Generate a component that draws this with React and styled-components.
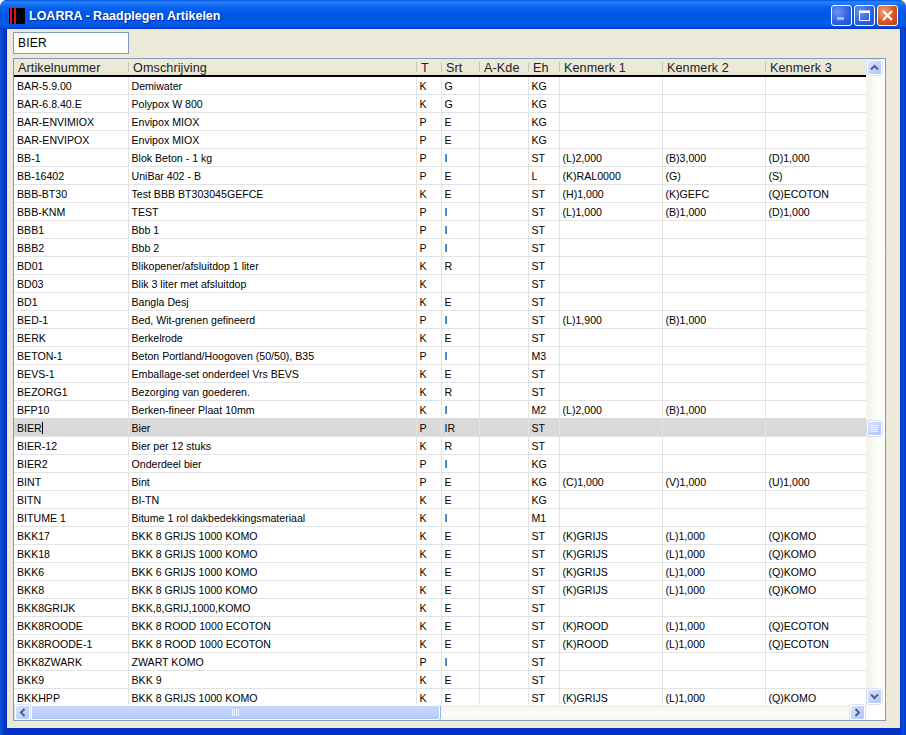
import React from 'react';
import styled, { createGlobalStyle } from 'styled-components';

const Global = createGlobalStyle`
  html, body { margin: 0; padding: 0; background: #fff; }
  #root { width: 906px; height: 735px; overflow: hidden; }
`;

const COLS = [115, 288, 25, 38, 49, 31, 103, 103, 101];
const GRID = COLS.map((c) => `${c}px`).join(' ');

const Win = styled.div`
  position: relative;
  width: 906px;
  height: 735px;
  box-sizing: border-box;
  border-radius: 7px 7px 0 0;
  background: linear-gradient(90deg, #0a58dc 0, #0331c4 5px, #0331c4 calc(100% - 6px), #0a4fdc calc(100% - 3px), #0335c8 100%);
  overflow: hidden;
`;
const TitleBar = styled.div`
  height: 29px;
  display: flex;
  align-items: center;
  padding: 2px 8px 0 9px;
  box-sizing: border-box;
  background: linear-gradient(180deg, #0050e0 0, #2a86f8 2px, #1c7ef8 3px, #0a62ee 7px, #0055e2 16px, #005ef0 23px, #0050da 27px, #0331c4 29px);
`;
const Logo = styled.svg`
  width: 16px;
  height: 16px;
  margin-right: 4px;
  flex: none;
`;
const TitleText = styled.div`
  flex: 1;
  font: bold 12.5px "Liberation Sans", Arial, sans-serif;
  letter-spacing: 0;
  color: #fff;
  text-shadow: 1px 1px 1px #0a2a9a;
`;
const WinBtn = styled.div`
  width: 21px;
  height: 21px;
  box-sizing: border-box;
  margin-left: 2px;
  border: 1px solid #fff;
  border-radius: 3px;
  display: flex;
  align-items: center;
  justify-content: center;
  background: ${(p) => (p.$close
    ? 'radial-gradient(circle at 30% 30%, #f0a080, #d8501f 60%, #c03a10)'
    : 'radial-gradient(circle at 30% 30%, #6a94f0, #2d5fe0 60%, #2452d4)')};
`;
const Body = styled.div`
  position: absolute;
  left: 7px;
  right: 6px;
  top: 29px;
  bottom: 7px;
  background: #ece9d8;
`;
const Search = styled.div`
  position: absolute;
  left: 6px;
  top: 3px;
  width: 116px;
  height: 22px;
  box-sizing: border-box;
  border: 1px solid #7f9db9;
  background: #fff;
  padding-left: 4px;
  font: 12px/21px "Liberation Sans", Arial, sans-serif;
  letter-spacing: 0.2px;
  color: #000;
`;
const Table = styled.div`
  position: absolute;
  left: 6px;
  top: 29px;
  width: 873px;
  height: 663px;
  box-sizing: border-box;
  border: 1px solid #7f9db9;
  background: #fff;
  overflow: hidden;
`;
const Head = styled.div`
  display: grid;
  grid-template-columns: ${GRID};
  height: 18px;
  box-sizing: border-box;
  width: 852px;
  background: linear-gradient(180deg, #ece9d8 0, #ece9d8 13px, #e2dfcc 16px, #d8d4bf 16px);
  border-bottom: 2px solid #000;
`;
const HeadCell = styled.div`
  font: 12.6px/18px "Liberation Sans", Arial, sans-serif;
  letter-spacing: 0.1px;
  color: #222;
  padding-left: 4px;
  white-space: nowrap;
  overflow: hidden;
  position: relative;
  &::after {
    content: '';
    position: absolute;
    right: 0;
    top: 3px;
    width: 1px;
    height: 10px;
    background: #c9c5b0;
  }
`;
const RowEl = styled.div`
  display: grid;
  grid-template-columns: ${GRID};
  height: 18px;
  box-sizing: border-box;
  width: 852px;
  border-bottom: 1px solid #e3e3e3;
  background: ${(p) => (p.$sel ? '#d9d9d9' : '#fff')};
  box-shadow: ${(p) => (p.$sel ? '0 -1px 0 #d9d9d9' : 'none')};
`;
const Cell = styled.div`
  font: 10.6px/19px "Liberation Sans", Arial, sans-serif;
  color: #000;
  padding-left: ${(p) => (p.$first ? 3 : 2.5)}px;
  box-sizing: border-box;
  border-right: 1px solid #e3e3e3;
  white-space: nowrap;
  overflow: hidden;
`;
const Caret = styled.span`
  display: inline-block;
  width: 1px;
  height: 12px;
  background: #000;
  vertical-align: -2px;
`;
const VTrack = styled.div`
  position: absolute;
  left: 852px;
  top: 0;
  width: 19px;
  height: 646px;
  background: linear-gradient(90deg, #f2f1ea, #fdfdfb 60%, #fff);
`;
const HTrack = styled.div`
  position: absolute;
  left: 0;
  top: 646px;
  width: 852px;
  height: 15px;
  background: linear-gradient(180deg, #f1f0e8, #fdfdfb 60%, #f6f5ee);
`;
const Corner = styled.div`
  position: absolute;
  left: 852px;
  top: 646px;
  width: 19px;
  height: 15px;
  background: #fff;
`;
const SbBtn = styled.div`
  position: absolute;
  left: ${(p) => p.$x}px;
  top: ${(p) => p.$y}px;
  width: ${(p) => p.$w || 15}px;
  height: ${(p) => p.$h || 15}px;
  box-sizing: border-box;
  border: 1px solid #fff;
  border-radius: 2px;
  background: linear-gradient(135deg, #d9e4fd, #c0d2fa 60%, #aec4f5);
  display: flex;
  align-items: center;
  justify-content: center;
  box-shadow: 0 0 0 0.5px #b8c8ea;
`;
const HThumb = styled.div`
  position: absolute;
  left: 17px;
  top: 0;
  width: 409px;
  height: 15px;
  box-sizing: border-box;
  border: 1px solid #fff;
  border-radius: 2px;
  background: linear-gradient(180deg, #c7d7fb, #bdd0fa 70%, #aec4f5);
  box-shadow: 1px 0 0 #9db5e6;
  display: flex;
  align-items: center;
  justify-content: center;
`;

const Chev = ({ d }) => (
  <svg width="9" height="7" viewBox="0 0 9 7">
    <path d={d} fill="none" stroke="#4d6185" strokeWidth="2" />
  </svg>
);
const ChevH = ({ d }) => (
  <svg width="7" height="9" viewBox="0 0 7 9">
    <path d={d} fill="none" stroke="#4d6185" strokeWidth="2" />
  </svg>
);

const raw = `BAR-5.9.00|Demiwater|K|G|KG|||
BAR-6.8.40.E|Polypox W 800|K|G|KG|||
BAR-ENVIMIOX|Envipox MIOX|P|E|KG|||
BAR-ENVIPOX|Envipox MIOX|P|E|KG|||
BB-1|Blok Beton - 1 kg|P|I|ST|(L)2,000|(B)3,000|(D)1,000
BB-16402|UniBar 402 - B|P|E|L|(K)RAL0000|(G)|(S)
BBB-BT30|Test BBB BT303045GEFCE|K|E|ST|(H)1,000|(K)GEFC|(Q)ECOTON
BBB-KNM|TEST|P|I|ST|(L)1,000|(B)1,000|(D)1,000
BBB1|Bbb 1|P|I|ST|||
BBB2|Bbb 2|P|I|ST|||
BD01|Blikopener/afsluitdop 1 liter|K|R|ST|||
BD03|Blik 3 liter met afsluitdop|K||ST|||
BD1|Bangla Desj|K|E|ST|||
BED-1|Bed, Wit-grenen gefineerd|P|I|ST|(L)1,900|(B)1,000|
BERK|Berkelrode|K|E|ST|||
BETON-1|Beton Portland/Hoogoven (50/50), B35|P|I|M3|||
BEVS-1|Emballage-set onderdeel Vrs BEVS|K|E|ST|||
BEZORG1|Bezorging van goederen.|K|R|ST|||
BFP10|Berken-fineer Plaat 10mm|K|I|M2|(L)2,000|(B)1,000|
BIER|Bier|P|IR|ST|||
BIER-12|Bier per 12 stuks|K|R|ST|||
BIER2|Onderdeel bier|P|I|KG|||
BINT|Bint|P|E|KG|(C)1,000|(V)1,000|(U)1,000
BITN|BI-TN|K|E|KG|||
BITUME 1|Bitume 1 rol dakbedekkingsmateriaal|K|I|M1|||
BKK17|BKK 8 GRIJS 1000 KOMO|K|E|ST|(K)GRIJS|(L)1,000|(Q)KOMO
BKK18|BKK 8 GRIJS 1000 KOMO|K|E|ST|(K)GRIJS|(L)1,000|(Q)KOMO
BKK6|BKK 6 GRIJS 1000 KOMO|K|E|ST|(K)GRIJS|(L)1,000|(Q)KOMO
BKK8|BKK 8 GRIJS 1000 KOMO|K|E|ST|(K)GRIJS|(L)1,000|(Q)KOMO
BKK8GRIJK|BKK,8,GRIJ,1000,KOMO|K|E|ST|||
BKK8ROODE|BKK 8 ROOD 1000 ECOTON|K|E|ST|(K)ROOD|(L)1,000|(Q)ECOTON
BKK8ROODE-1|BKK 8 ROOD 1000 ECOTON|K|E|ST|(K)ROOD|(L)1,000|(Q)ECOTON
BKK8ZWARK|ZWART KOMO|P|I|ST|||
BKK9|BKK 9|K|E|ST|||
BKKHPP|BKK 8 GRIJS 1000 KOMO|K|E|ST|(K)GRIJS|(L)1,000|(Q)KOMO`;

const rows = raw.split('\n').map((l) => {
  const [a, b, t, s, e, k1, k2, k3] = l.split('|');
  return { a, b, t, s, e, k1, k2, k3 };
});

const heads = ['Artikelnummer', 'Omschrijving', 'T', 'Srt', 'A-Kde', 'Eh', 'Kenmerk 1', 'Kenmerk 2', 'Kenmerk 3'];

export default function App() {
  return (
    <Win>
      <Global />
      <TitleBar>
        <Logo viewBox="0 0 16 16">
          <rect width="16" height="16" fill="#000" />
          <rect x="1" y="0" width="2" height="16" fill="#e01010" />
          <rect x="5" y="0" width="2" height="16" fill="#e01010" />
        </Logo>
        <TitleText>LOARRA - Raadplegen Artikelen</TitleText>
        <WinBtn>
          <svg width="13" height="13" viewBox="0 0 13 13"><rect x="2" y="8" width="7" height="3" fill="#a8bdf0" /></svg>
        </WinBtn>
        <WinBtn>
          <svg width="13" height="13" viewBox="0 0 13 13"><path d="M1.5 3.5h10v8h-10z" fill="none" stroke="#fff" /><rect x="1" y="1.5" width="11" height="2" fill="#fff" /></svg>
        </WinBtn>
        <WinBtn $close>
          <svg width="13" height="13" viewBox="0 0 13 13"><path d="M2 2l9 9M11 2l-9 9" stroke="#fff" strokeWidth="2.2" /></svg>
        </WinBtn>
      </TitleBar>
      <Body>
        <Search>BIER</Search>
        <Table>
          <Head>
            {heads.map((h) => <HeadCell key={h}>{h}</HeadCell>)}
          </Head>
          {rows.map((r) => (
            <RowEl key={r.a} $sel={r.a === 'BIER'}>
              <Cell $first>{r.a}{r.a === 'BIER' && <Caret />}</Cell>
              <Cell>{r.b}</Cell>
              <Cell>{r.t}</Cell>
              <Cell>{r.s}</Cell>
              <Cell />
              <Cell>{r.e}</Cell>
              <Cell>{r.k1}</Cell>
              <Cell>{r.k2}</Cell>
              <Cell>{r.k3}</Cell>
            </RowEl>
          ))}
          <VTrack>
            <SbBtn $x={1} $y={1}><Chev d="M1 5.5L4.5 2L8 5.5" /></SbBtn>
            <SbBtn $x={1} $y={362}>
              <svg width="9" height="9" viewBox="0 0 9 9"><path d="M1 1.5h7M1 3.5h7M1 5.5h7M1 7.5h7" stroke="#eef3ff" /></svg>
            </SbBtn>
            <SbBtn $x={1} $y={630}><Chev d="M1 1.5L4.5 5L8 1.5" /></SbBtn>
          </VTrack>
          <HTrack>
            <SbBtn $x={1} $y={0}><ChevH d="M5.5 1L2 4.5L5.5 8" /></SbBtn>
            <HThumb>
              <svg width="9" height="7" viewBox="0 0 9 7"><path d="M1.5 0v7M3.5 0v7M5.5 0v7M7.5 0v7" stroke="#eef3ff" /></svg>
            </HThumb>
            <SbBtn $x={836} $y={0}><ChevH d="M1.5 1L5 4.5L1.5 8" /></SbBtn>
          </HTrack>
          <Corner />
        </Table>
      </Body>
    </Win>
  );
}
